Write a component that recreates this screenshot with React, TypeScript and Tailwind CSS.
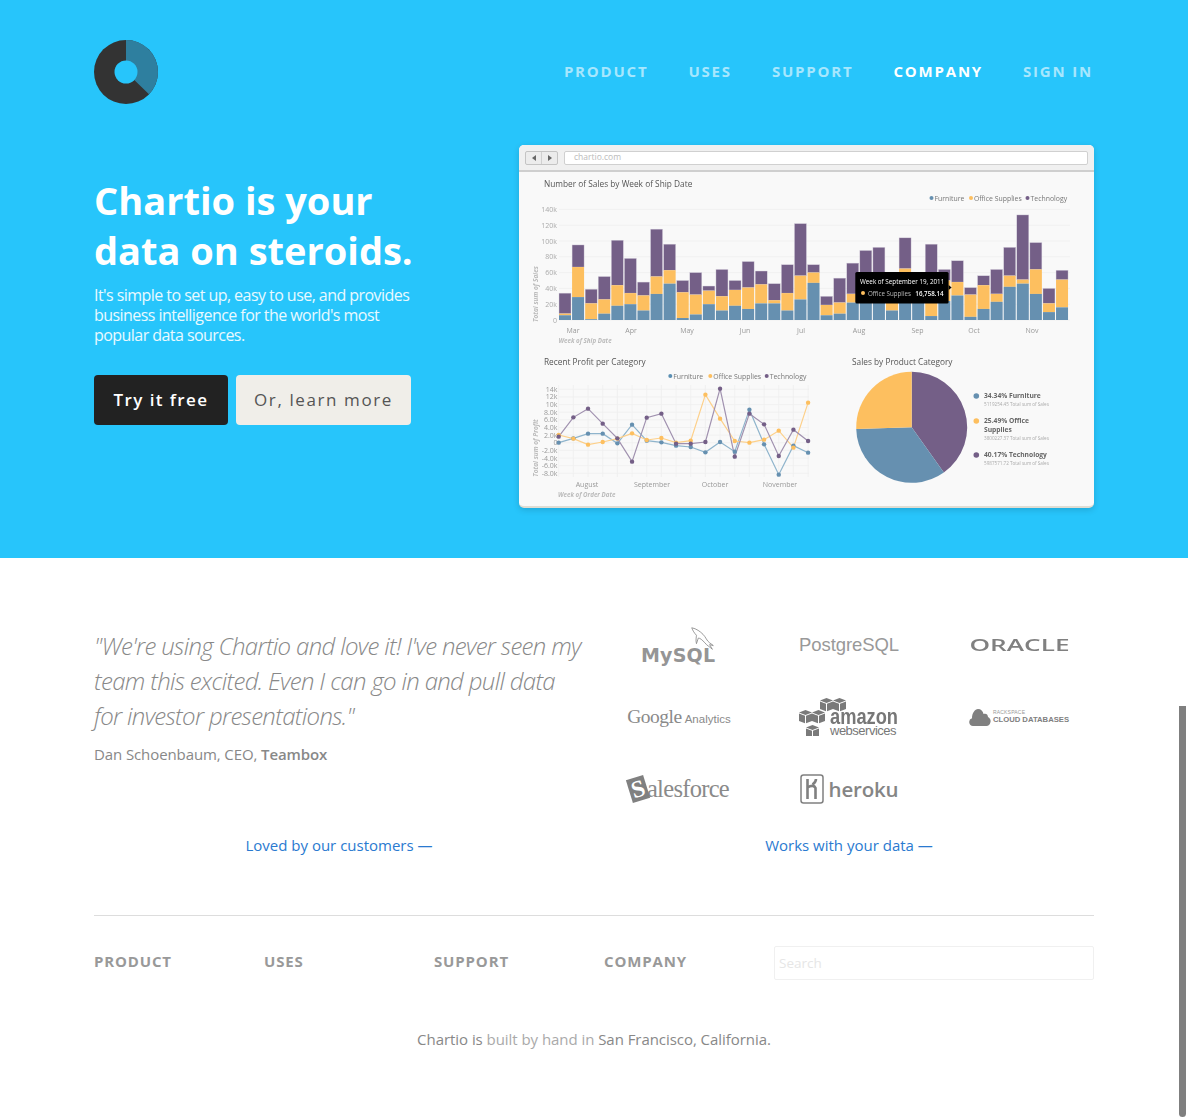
const navItems = ['PRODUCT', 'USES', 'SUPPORT', 'COMPANY', 'SIGN IN'];
const footerItems = ['PRODUCT', 'USES', 'SUPPORT', 'COMPANY'];

const BLUE = '#6690b0';
const YELLOW = '#fdbf5f';
const PURPLE = '#745f87';

// furniture, office supplies, technology: cumulative tops in thousands
const bars = [
  [6, 8, 34], [29, 67, 95], [1, 21, 39], [8, 26, 55], [18, 44, 101], [20, 34, 78], [12, 31, 48], [33, 55, 115],
  [46, 63, 96], [2.5, 35, 50], [7, 32, 60], [20, 37, 43], [12, 30, 64], [18, 38, 50], [14, 41, 74], [21, 45, 62],
  [21, 25, 46], [12, 34, 70], [26, 56, 122], [47, 60, 70], [6, 19, 30], [8, 22, 53], [22, 33, 72], [22, 50, 88],
  [25, 52, 92], [12, 22, 40], [25, 65, 104], [25, 38, 50], [5, 40, 96], [24, 50, 64], [31, 48, 75], [4, 32, 41],
  [14, 44, 56], [23, 33, 64], [42, 56, 92], [46, 51, 133], [33, 64, 98], [10, 21, 40], [16, 51, 63],
];

const lineFurniture = [293, 280, 266, 266, 295, 239, 287, 292, 302, 306, 322, 291, 320, 194, 298, 389, 302, 323];
const lineOffice = [270, 281, 299, 291, 281, 265, 285, 279, 293, 287, 149, 221, 288, 293, 284, 257, 308, 173];
const lineTech = [275, 217, 191, 236, 280, 350, 218, 206, 296, 296, 291, 131, 335, 206, 238, 333, 254, 288];

const barY = (k: number) => 320 - k * 0.79;
const lineX = (i: number) => 558.7 + i * 14.67;
const lineY = (z: number) => 345 + z / 3;

const LegendItems = ({ items, y }: { items: [number, string, string][]; y: number }) => (
  <g fontSize="6.9" fill="#777">
    {items.map(([x, color, label]) => (
      <g key={label}>
        <circle cx={x} cy={y} r="2" fill={color} />
        <text x={x + 3} y={y + 2.5}>{label}</text>
      </g>
    ))}
  </g>
);

const SalesChart = () => (
  <svg viewBox="519 172 575 178" className="block h-[178px] w-[575px]">
    <text x="544" y="187" fontSize="8.300" fontWeight="500" fill="#555">Number of Sales by Week of Ship Date</text>
    <LegendItems y={198} items={[[931.5, BLUE, 'Furniture'], [971, YELLOW, 'Office Supplies'], [1027.5, PURPLE, 'Technology']]} />
    {[0, 20, 40, 60, 80, 100, 120, 140].map((k) => (
      <g key={k}>
        <line x1="559" x2="1070" y1={barY(k)} y2={barY(k)} stroke="#f1f1f1" />
        <text x="557" y={barY(k) + 2.5} fontSize="7" textAnchor="end" fill="#aaa">{k === 0 ? '0' : `${k}k`}</text>
      </g>
    ))}
    {bars.map(([f, o, t], i) => {
      const x = 559 + i * 13.08;
      return (
        <g key={i}>
          <rect x={x} y={barY(t)} width="12" height={barY(o) - barY(t)} fill={PURPLE} stroke="#d8d2de" strokeWidth="0.4" />
          <rect x={x} y={barY(o)} width="12" height={barY(f) - barY(o)} fill={YELLOW} />
          <rect x={x} y={barY(f)} width="12" height={320 - barY(f)} fill={BLUE} />
        </g>
      );
    })}
    {[['Mar', 573], ['Apr', 631], ['May', 687], ['Jun', 745], ['Jul', 801], ['Aug', 859], ['Sep', 917.5], ['Oct', 974], ['Nov', 1032]].map(([m, x]) => (
      <text key={m} x={x} y="332.5" fontSize="7" textAnchor="middle" fill="#999">{m}</text>
    ))}
    <text x="558.5" y="342.5" fontSize="6.2" fontWeight="700" fontStyle="italic" fill="#bbb">Week of Ship Date</text>
    <text transform="translate(538 294) rotate(-90)" fontSize="6.5" fontWeight="700" fontStyle="italic" textAnchor="middle" fill="#bbb">Total sum of Sales</text>
    <rect x="855.3" y="272" width="93.3" height="31.5" rx="1.5" fill="#000" />
    <path d="M948.6 285l3 2.5-3 2.5z" fill="#000" />
    <text x="860" y="283.5" fontSize="6.300" fill="#fff">Week of September 19, 2011</text>
    <circle cx="863" cy="293" r="2" fill={YELLOW} />
    <text x="868" y="295.5" fontSize="6.200" fill="#bbb">Office Supplies</text>
    <text x="943.5" y="295.5" fontSize="6.200" fontWeight="600" textAnchor="end" fill="#fff">16,758.14</text>
  </svg>
);

const ProfitChart = () => {
  const series: [number[], string][] = [[lineFurniture, '#8fb4cc'], [lineOffice, '#fdd08a'], [lineTech, '#a091af']];
  const dots = [BLUE, YELLOW, PURPLE];
  const labels = ['14k', '12k', '10k', '8.0k', '6.0k', '4.0k', '2.0k', '0', '-2.0k', '-4.0k', '-6.0k', '-8.0k'];
  return (
    <svg viewBox="519 350 300 156" className="block h-[156px] w-[300px]">
      <text x="544" y="365" fontSize="8.300" fontWeight="500" fill="#555">Recent Profit per Category</text>
      <LegendItems y={376} items={[[670.3, '#5b8fb3', 'Furniture'], [710.3, YELLOW, 'Office Supplies'], [766.7, PURPLE, 'Technology']]} />
      {labels.map((l, i) => {
        const y = 389.3 + i * 7.64;
        return (
          <g key={l}>
            <line x1="559" x2="809" y1={y} y2={y} stroke="#efefef" strokeWidth="0.8" />
            <text x="557.5" y={y + 2.5} fontSize="7" textAnchor="end" fill="#999">{l}</text>
          </g>
        );
      })}
      {lineFurniture.map((_, i) => (
        <line key={i} x1={lineX(i)} x2={lineX(i)} y1="385" y2="477" stroke="#efefef" strokeWidth="0.8" />
      ))}
      {series.map(([vals, color]) => (
        <polyline key={color} points={vals.map((v, i) => `${lineX(i)},${lineY(v)}`).join(' ')} fill="none" stroke={color} strokeWidth="1.2" />
      ))}
      {series.map(([vals], s) =>
        vals.map((v, i) => <circle key={`${s}-${i}`} cx={lineX(i)} cy={lineY(v)} r="2.2" fill={dots[s]} />),
      )}
      {[['August', 587], ['September', 652], ['October', 715], ['November', 780]].map(([m, x]) => (
        <text key={m} x={x} y="486.5" fontSize="7" textAnchor="middle" fill="#999">{m}</text>
      ))}
      <text x="558" y="497" fontSize="6.200" fontWeight="700" fontStyle="italic" fill="#bbb">Week of Order Date</text>
      <text transform="translate(538 448) rotate(-90)" fontSize="6.5" fontWeight="700" fontStyle="italic" textAnchor="middle" fill="#bbb">Total sum of Profit</text>
    </svg>
  );
};

const pieSlices: [number, number, string][] = [
  [0, 144.6, PURPLE],
  [144.6, 268.2, BLUE],
  [268.2, 360, YELLOW],
];

const piePoint = (deg: number) => {
  const rad = (deg * Math.PI) / 180;
  return `${911.7 + 55.5 * Math.sin(rad)} ${427.3 - 55.5 * Math.cos(rad)}`;
};

const PieChart = () => (
  <svg viewBox="819 350 275 156" className="block h-[156px] w-[275px]">
    <text x="852" y="365" fontSize="8.300" fontWeight="500" fill="#555">Sales by Product Category</text>
    {pieSlices.map(([a, b, color]) => (
      <path key={color} d={`M911.7 427.3L${piePoint(a)}A55.5 55.5 0 0 1 ${piePoint(b)}Z`} fill={color} />
    ))}
    <g fontSize="6.700" fontWeight="700" fill="#666">
      <circle cx="976.3" cy="396" r="2.8" fill={BLUE} />
      <text x="984" y="398">34.34% Furniture</text>
      <circle cx="976.3" cy="421" r="2.8" fill={YELLOW} />
      <text x="984" y="423">25.49% Office</text>
      <text x="984" y="432">Supplies</text>
      <circle cx="976.3" cy="455" r="2.8" fill={PURPLE} />
      <text x="984" y="457">40.17% Technology</text>
    </g>
    <g fontSize="4.6" fill="#aaa">
      <text x="984" y="405.5">5119254.45 Total sum of Sales</text>
      <text x="984" y="439.5">3800227.37 Total sum of Sales</text>
      <text x="984" y="464.5">5987571.72 Total sum of Sales</text>
    </g>
  </svg>
);

const BrowserCard = () => (
  <div className="w-[575px] overflow-hidden rounded-[5px] border-b-2 border-[#e0ddd3] bg-[#f9f9f9] shadow-[0_2px_6px_rgba(0,0,0,0.15)]">
    <div className="flex h-[27px] items-center gap-[6px] border-b-2 border-[#cfcfcf] bg-[#f0f0f0] pl-[6px] pr-[6px]">
      <div className="flex h-[14px] w-[33px] rounded-[2px] border border-[#c4c4c4] bg-[#ececec]">
        <div className="flex flex-1 items-center justify-center border-r border-[#d0d0d0]">
          <span className="h-0 w-0 border-y-[3px] border-r-[4px] border-y-transparent border-r-[#666]" />
        </div>
        <div className="flex flex-1 items-center justify-center">
          <span className="h-0 w-0 border-y-[3px] border-l-[4px] border-y-transparent border-l-[#666]" />
        </div>
      </div>
      <div className="flex h-[14px] flex-1 items-center rounded-[2px] border border-[#d0d0d0] bg-white pl-[9px] text-[8.5px] text-[#bbb]">
        chartio.com
      </div>
    </div>
    <div className="blur-[0.3px]">
      <SalesChart />
      <div className="flex">
        <ProfitChart />
        <PieChart />
      </div>
    </div>
  </div>
);

const MySqlLogo = () => (
  <div className="relative h-[40px] w-[76px] text-[#888]">
    <svg viewBox="0 0 32 28" className="absolute left-[47px] top-0 h-[28px] w-[30px]" fill="none" stroke="#8a8a8a" strokeWidth="0.9">
      <path d="M4 2c5 1 9 4 12 7 3 3 4 7 7 9l4 3-4-1 3 5c-3-3-6-4-8-7-3-3-5-5-7-5l-2 6c-1-4 0-7 0-9C7 8 5 5 4 2z" />
    </svg>
    <span className="absolute bottom-[-1px] left-0 font-['DejaVu_Sans'] text-[19px] font-bold leading-[22px] tracking-[0.2px] text-[#959595]">MySQL</span>
  </div>
);

const amazonCubes = [[21, 0], [34, 0], [0, 12], [13, 12], [7, 27]];

const AmazonLogo = () => (
  <div className="relative h-[38px] w-[100px]">
    <svg viewBox="0 0 48 38" className="h-[38px] w-[48px]" fill="#7a7a7a">
      {amazonCubes.map(([x, y]) => (
        <path key={`${x}-${y}`} d={`M${x + 6.5} ${y}l6.500 2.500-6.500 2.500-6.500-2.500zM${x} ${y + 3.5}l6 2.300v7.500l-6-2.300zM${x + 13} ${y + 3.5}l-6 2.300v7.500l6-2.300z`} />
      ))}
    </svg>
    <div className="absolute left-[31px] top-[10px] flex flex-col font-['Liberation_Sans']">
      <span className="origin-left scale-x-[0.83] text-[22px] font-bold leading-[18px] text-[#777]">amazon</span>
      <span className="text-[13px] leading-[9px] tracking-[-0.5px] text-[#777]">webservices</span>
    </div>
  </div>
);

const RackspaceLogo = () => (
  <div className="flex items-center">
    <svg viewBox="0 0 22 18" className="h-[18px] w-[22px]" fill="#808080">
      <path d="M4 18a4 4 0 0 1-1-7.800C3 5 6 1 9 1c3 0 5 2 5.500 5 2-1 4.500 0 4.500 3 2 1 3 3 2.500 5-.5 2.500-2 4-4 4z" />
    </svg>
    <div className="ml-[2px] flex flex-col font-['Liberation_Sans']">
      <span className="text-[5px] leading-[5px] tracking-[0.2px] text-[#999]">RACKSPACE</span>
      <span className="whitespace-nowrap text-[7.700px] font-bold leading-[9px] text-[#808080]">CLOUD DATABASES</span>
    </div>
  </div>
);

const SalesforceLogo = () => (
  <div className="flex items-center">
    <span className="flex h-[24px] w-[18px] -rotate-[17deg] items-center justify-center bg-[#808080] font-['Liberation_Serif'] text-[24px] font-bold leading-none text-white">S</span>
    <span className="font-['Liberation_Serif'] text-[24.500px] leading-none tracking-[-0.7px] text-[#8a8a8a]">alesforce</span>
  </div>
);

const HerokuLogo = () => (
  <div className="flex items-center gap-[5px]">
    <svg viewBox="0 0 24 30" className="h-[30px] w-[24px]" fill="none" stroke="#808080">
      <rect x="1" y="1" width="22" height="28" rx="2.5" strokeWidth="1.5" />
      <path d="M7.500 5v20M7.500 13.500c4-2.500 7-2 8 .5v11M16 5c0 2.500-2 4.500-3.500 5.500" strokeWidth="2.600" />
    </svg>
    <span className="text-[20.500px] font-semibold leading-none tracking-[-0.2px] text-[#858585]">heroku</span>
  </div>
);

const logos = [
  <MySqlLogo key="mysql" />,
  <span key="pg" className="font-['Liberation_Sans'] text-[18.500px] tracking-[-0.1px] text-[#999]">PostgreSQL</span>,
  <span key="oracle" className="inline-block scale-x-[1.54] font-['Open_Sans'] text-[17px] font-semibold text-[#808080]">ORACLE</span>,
  <div key="ga" className="flex items-baseline gap-[3px]">
    <span className="font-['Liberation_Serif'] text-[19.500px] tracking-[-0.5px] text-[#8a8a8a]">Google</span>
    <span className="font-['Liberation_Sans'] text-[11.500px] text-[#8a8a8a]">Analytics</span>
  </div>,
  <AmazonLogo key="aws" />,
  <RackspaceLogo key="rack" />,
  <SalesforceLogo key="sf" />,
  <HerokuLogo key="heroku" />,
];

export default function App() {
  return (
    <div className="relative min-h-[1119px] bg-white font-['Open_Sans',sans-serif]">
      <section className="h-[558px] bg-[#27c5fb] px-[94px] pt-[40px]">
        <header className="flex items-start justify-between">
          <svg viewBox="0 0 64 64" className="h-[64px] w-[64px]">
            <circle cx="32" cy="32" r="32" fill="#333" />
            <path d="M32 0a32 32 0 0 1 23 54.200L32 32z" fill="#2e7f9f" />
            <circle cx="32" cy="32" r="11.500" fill="#27c5fb" />
          </svg>
          <nav className="mr-[1px] flex gap-[40px] pt-[20px] text-[15px] font-bold leading-[22px] tracking-[1.800px]">
            {navItems.map((item) => (
              <a key={item} className={item === 'COMPANY' ? 'text-white' : 'text-white/60'}>
                {item}
              </a>
            ))}
          </nav>
        </header>

        <div className="flex justify-between">
          <div className="w-[340px] shrink-0 pt-[71px]">
            <h1 className="whitespace-nowrap text-[38px] font-bold leading-[50px] text-white">
              Chartio is your
              <br />
              data on steroids.
            </h1>
            <p className="mt-[10px] whitespace-nowrap text-[16px] leading-[20px] tracking-[-0.55px] text-white/90">
              It's simple to set up, easy to use, and provides
              <br />
              business intelligence for the world's most
              <br />
              popular data sources.
            </p>
            <div className="mt-[30px] flex gap-[8px]">
              <button className="h-[50px] w-[134px] rounded-[4px] bg-[#222] text-[17px] font-semibold tracking-[1.400px] text-white">
                Try it free
              </button>
              <button className="h-[50px] w-[175px] rounded-[4px] bg-[#f0eee9] text-[17px] tracking-[1.600px] text-[#555]">
                Or, learn more
              </button>
            </div>
          </div>
          <div className="pt-[41px]">
            <BrowserCard />
          </div>
        </div>
      </section>

      <section className="px-[94px] pt-[51px]">
        <div className="flex">
          <div className="w-[500px] shrink-0 pt-[19px]">
            <blockquote className="w-[490px] text-[24px] font-light italic leading-[35px] tracking-[-0.67px] text-[#888]">
              "We're using Chartio and love it! I've never seen my team this excited. Even I can go in and pull data for investor presentations."
            </blockquote>
            <p className="mt-[10px] text-[15px] leading-[22px] tracking-[-0.1px] text-[#888]">
              Dan Schoenbaum, CEO, <span className="font-semibold">Teambox</span>
            </p>
          </div>
          <div className="grid shrink-0 grid-cols-[170px_170px_170px] auto-rows-[72px]">
            {logos.map((logo, i) => (
              <div key={i} className="flex items-center justify-center">
                {logo}
              </div>
            ))}
          </div>
        </div>

        <div className="mt-[9px] flex text-[15px] leading-[22px] text-[#2a7ad0]">
          <a className="w-[490px] text-center">Loved by our customers —</a>
          <a className="ml-[20px] w-[490px] text-center">Works with your data —</a>
        </div>

        <div className="mt-[59px] border-t border-[#ddd] pt-[30px]">
          <div className="flex items-start">
            {footerItems.map((item) => (
              <a key={item} className="w-[170px] text-[15px] font-bold leading-[30px] tracking-[0.850px] text-[#999]">
                {item}
              </a>
            ))}
            <input
              placeholder="Search"
              className="h-[34px] w-[320px] rounded-[2px] border border-[#f0f0f0] pb-[1px] pl-[4px] text-[13.500px] placeholder:text-[#e6e6e6]"
            />
          </div>
          <p className="mt-[48px] text-center text-[15px] leading-[22px] tracking-[-0.05px] text-[#888]">
            Chartio is <span className="text-[#aaa]">built by hand in</span> San Francisco, California.
          </p>
        </div>
      </section>

      <div className="absolute bottom-[2px] right-[2px] top-[706px] w-[7px] rounded-b-[4px] bg-[#7f7f7f]" />
    </div>
  );
}
